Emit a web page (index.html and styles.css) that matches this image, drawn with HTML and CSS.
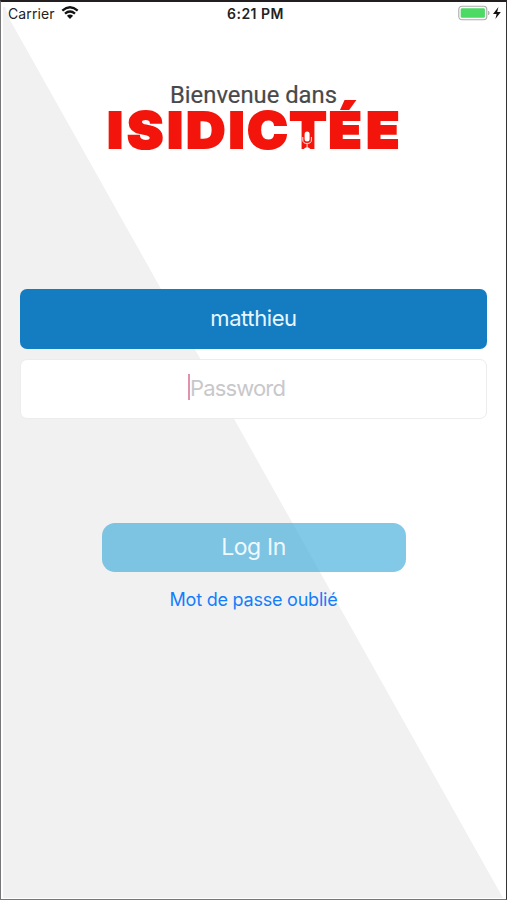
FILE: index.html
```html
<!DOCTYPE html>
<html lang="fr">
<head>
<meta charset="utf-8">
<title>Isidictée</title>
<link rel="stylesheet" href="styles.css">
</head>
<body>
<main class="screen">
  <svg class="backdrop" viewBox="0 0 507 900" aria-hidden="true"><path d="M3 7H5L10 20L503 898H3Z"/></svg>
  <header class="status">
    <div class="network"><span>Carrier</span>
      <svg class="wifi" width="18" height="14" viewBox="0 0 18 14"><path d="M1.3 4.6Q9-2 16.7 4.6M4 7.6Q9 3.3 14 7.6" fill="none" stroke="#111" stroke-width="2.3"/><path d="M5.9 9.7Q9 7.2 12.1 9.7L9 13Z" fill="#111"/></svg>
    </div>
    <time class="clock">6:21 PM</time>
    <div class="power">
      <svg width="44" height="16" viewBox="0 0 44 16"><rect x=".8" y="1.3" width="28" height="13.4" rx="3.2" fill="#fff" stroke="#aaa" stroke-width="1.1"/><rect x="2.7" y="3.2" width="24.2" height="9.6" rx="1.4" fill="#4cd964"/><path d="M30.5 6Q32 8 30.5 10Z" fill="#aaa" stroke="#aaa" stroke-width=".7"/><path d="M40.4 2L35 9H38.6L37.4 14L42.8 7H39.2Z" fill="#111"/></svg>
    </div>
  </header>
  <svg class="logo" width="300" height="74" viewBox="0 0 300 74" role="img" aria-label="Bienvenue dans Isidictée">
    <text class="welcome" x="66" y="23" textLength="167" lengthAdjust="spacingAndGlyphs">Bienvenue dans</text>
    <text class="wordmark" transform="scale(1.09 1)" x="3.1 21.3 58.1 75.5 114.5 131.4 170.1 205.9 240.7" y="68">ISIDICTÉE</text>
    <g fill="none" stroke="#fff" stroke-width=".9"><rect x="200.6" y="51.5" width="5" height="10" rx="2.5" fill="#fff" stroke="none"/><path d="M198.8 57V60Q198.8 63.5 203.1 63.5Q207.4 63.5 207.4 60V57M203.1 63.5V68"/><path d="M199.5 69.2Q203 65.2 206.7 69.2Z" fill="#fff" stroke="none"/></g>
  </svg>
  <form class="login">
    <div class="field user">matthieu</div>
    <div class="field password"><span class="caret"></span><span>Password</span></div>
    <button class="submit" type="button">Log In</button>
    <a class="forgot">Mot de passe oublié</a>
  </form>
</main>
</body>
</html>
```
FILE: styles.css
```css
* { box-sizing: border-box; }
body { margin: 0; font-family: Inter, "Liberation Sans", sans-serif; }
.screen {
  position: relative;
  width: 507px;
  height: 900px;
  overflow: hidden;
  display: flex;
  flex-direction: column;
  align-items: center;
  background: #fff;
  border: 1px solid #77777a;
  border-top: 2px solid #231f20;
  border-right-color: #333;
}
.backdrop { position: absolute; left: -1px; top: -2px; width: 507px; height: 900px; fill: #f1f1f1; }
.status {
  position: relative;
  width: 100%;
  height: 24px;
  padding: 0 4px 2px 7px;
  display: grid;
  grid-template-columns: 1fr auto 1fr;
  align-items: center;
  font-size: 14px;
  color: #222;
}
.network { display: flex; align-items: center; gap: 6px; }
.network span { letter-spacing: .1px; }
.clock { font-weight: 600; letter-spacing: .5px; padding-left: 1px; }
.power { display: flex; justify-content: flex-end; }
.logo { position: relative; margin-top: 54px; flex: none; overflow: visible; }
.welcome { font: 400 23.5px Roboto, sans-serif; fill: #48494b; stroke: #48494b; stroke-width: .2px; }
.wordmark { font: 900 49.5px Inter, sans-serif; fill: #f3150b; stroke: #f3150b; stroke-width: 2px; }
.login {
  position: relative;
  width: 467px;
  margin-top: 135px;
  display: flex;
  flex-direction: column;
  align-items: center;
}
.field {
  width: 100%;
  height: 60px;
  padding-bottom: 3px;
  display: flex;
  align-items: center;
  justify-content: center;
  border-radius: 7px;
  font-size: 22px;
}
.user { background: #147dc2; color: #e8f6ff; letter-spacing: -.4px; }
.password { margin-top: 10px; padding-right: 34px; background: #fff; border: 1px solid #ececec; color: #c8c8cb; letter-spacing: -.85px; }
.caret { width: 2px; height: 26px; margin-top: -2px; background: #e091ab; }
.submit {
  width: 304px;
  height: 49px;
  margin-top: 103.5px;
  padding: 0;
  border: 0;
  border-radius: 13px;
  background: rgba(54, 167, 216, .62);
  color: #eff9ff;
  font: 400 23px Inter, sans-serif;
  letter-spacing: -.4px;
}
.forgot { margin-top: 17px; font-size: 18px; line-height: 22px; letter-spacing: -.22px; color: #147efb; }
```
